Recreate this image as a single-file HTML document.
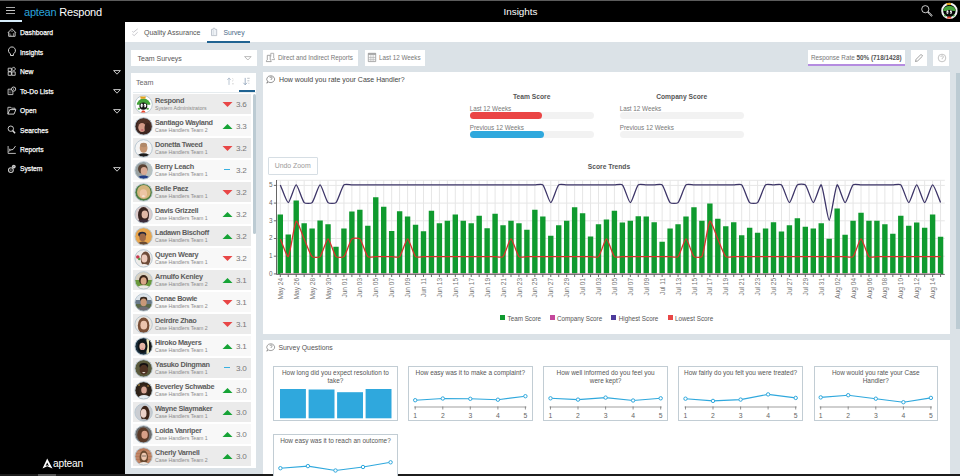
<!DOCTYPE html>
<html><head><meta charset="utf-8">
<style>
*{margin:0;padding:0;box-sizing:border-box}
html,body{width:960px;height:476px;overflow:hidden;background:#000;font-family:"Liberation Sans",sans-serif}
.a{position:absolute}
#topline{position:absolute;left:0;top:0;width:960px;height:1px;background:#5c5c5c}
#botline{position:absolute;left:0;top:474px;width:960px;height:2px;background:#1c1c1c}
#botthumb{position:absolute;left:37.5px;top:474px;width:18px;height:2px;background:#555}
.hb{position:absolute;left:6px;width:9px;height:1px;background:#c8c8c8}
#hbul{position:absolute;left:0;top:20.3px;width:22px;height:2px;background:#d6ecfa}
#logo{position:absolute;left:24px;top:5.7px;font-size:11px;color:#fff;letter-spacing:-0.2px;white-space:nowrap}
#logo span{color:#2aa3dc}
#title{position:absolute;left:503.5px;top:5.5px;font-size:9.9px;color:#fff}
.mi{position:absolute;left:19.8px;font-size:7.6px;color:#fff;white-space:nowrap;transform:scaleX(0.885);transform-origin:0 0;-webkit-text-stroke:0.25px #fff}
.mic{position:absolute;left:8px;width:8px;height:8px}
.marr{position:absolute;left:113px}
#content{position:absolute;left:125px;top:22px;width:835px;height:452px;background:#dbe2e7}
#tabs{position:absolute;left:125px;top:22px;width:835px;height:20.2px;background:#fff}
.tab{position:absolute;top:29.3px;font-size:7px;color:#555;white-space:nowrap}
#tabul{position:absolute;left:206.7px;top:40.6px;width:43.5px;height:2px;background:#1f6392}
.white{position:absolute;background:#fff}
.txt{position:absolute;white-space:nowrap}
.row{position:absolute;left:132.8px;width:118.5px;height:20.3px}
.odd{background:#ebebeb}.even{background:#f8f8f8}
.av{position:absolute}
.nm{position:absolute;left:155px;font-size:7.3px;font-weight:bold;color:#5c5c5c;letter-spacing:-0.3px;white-space:nowrap}
.sub{position:absolute;left:155px;font-size:5.2px;color:#8a8a8a;white-space:nowrap;letter-spacing:0px}
.tr{position:absolute}
.dash{position:absolute;width:6px;height:1.4px;background:#38b0e0}
.sc{position:absolute;left:236px;font-size:8.1px;color:#777;letter-spacing:-0.3px}
.yl{font-size:6.4px;fill:#666;font-family:"Liberation Sans",sans-serif}
.xl{font-size:6.6px;fill:#777;font-family:"Liberation Sans",sans-serif}
.cl{font-size:6.8px;fill:#666;font-family:"Liberation Sans",sans-serif}
.card{position:absolute;width:124.5px;height:54.5px;border:1px solid #c2cdd4;background:#fff}
.ct{position:absolute;left:0;right:0;top:1.5px;text-align:center;font-size:6.45px;line-height:8.4px;color:#555}
.lg{position:absolute;top:314.5px;font-size:6.3px;color:#555;white-space:nowrap}
.lgs{position:absolute;top:315px;width:5px;height:5px}
.bar{position:absolute;height:7px;border-radius:3.5px;background:#f2f2f2;width:124px}
.barl{position:absolute;font-size:6.3px;color:#777;white-space:nowrap}
</style></head><body>
<div id="topline"></div>
<div class="hb" style="top:6.7px;background:#aaa"></div><div class="hb" style="top:9.9px"></div><div class="hb" style="top:13px;background:#aaa"></div>
<div id="hbul"></div>
<div id="logo"><span>aptean</span> Respond</div>
<div id="title">Insights</div>
<!-- search icon -->
<svg class="a" style="left:920px;top:4px" width="14" height="14" viewBox="0 0 14 14"><circle cx="5.3" cy="5.2" r="3.6" fill="none" stroke="#ddd" stroke-width="0.9"/><path d="M7.9 7.9l4.2 4.2" stroke="#ddd" stroke-width="1.6"/><path d="M8.9 8.9l3.2 3.2" stroke="#000" stroke-width="0.5"/></svg>
<!-- top avatar -->
<svg class="a" style="left:939px;top:1px" width="20" height="20" viewBox="0 0 20 20">
<circle cx="10.4" cy="9.9" r="7.2" fill="#000" stroke="#f2f2f2" stroke-width="2"/>
<path d="M4.1 10A6.3 5.2 0 0 1 16.7 10Z" fill="#45a23a"/>
<ellipse cx="6.2" cy="14.6" rx="1.2" ry="1" fill="#45a23a"/><ellipse cx="14.5" cy="14.6" rx="1.2" ry="1" fill="#45a23a"/>
<path d="M7.4 2.1h4.8l-0.5 2h-3.8z" fill="#e2a21c"/>
<ellipse cx="10.4" cy="12.2" rx="4.2" ry="3.3" fill="#0a0a0a"/>
<ellipse cx="8.5" cy="11.1" rx="1.05" ry="1.9" fill="#fff"/><ellipse cx="11.9" cy="11.1" rx="1" ry="1.9" fill="#fff"/>
<path d="M9 11v1.2M11.4 11v1.2" stroke="#111" stroke-width="0.6"/>
<path d="M7.8 17.6C8.2 16.2 9.2 15.6 10.2 15.6S12.2 16.2 12.6 17.6z" fill="#e8452c"/>
</svg>
<div class="mi" style="top:28.2px">Dashboard</div>
<svg class="a" style="left:4px;top:24px" width="16" height="16"><path d="M4 8.6L7.9 4.7L11.8 8.6M4.7 8v4.3h6.4V8" fill="none" stroke="#ddd" stroke-width="0.9"/><path d="M6.7 7.1h2.4M5.9 9.3v1.3M5.4 11.2h2M9.4 9.2v3" stroke="#ccc" stroke-width="0.7"/></svg>
<div class="mi" style="top:47.6px">Insights</div>
<svg class="a" style="left:4px;top:44px" width="16" height="16"><path d="M6.5 9.8A3.5 3.6 0 1 1 9.4 9.8V11.5H6.5Z" fill="none" stroke="#ddd" stroke-width="0.95"/></svg>
<div class="mi" style="top:67.1px">New</div>
<svg class="a" style="left:4px;top:63px" width="16" height="16"><path d="M4.2 5.2h3.2v3.2h-3.2zM4.2 8.9h3.2v3.4h-3.2zM7.9 8.9h3.3v3.4h-3.3zM9.6 3.9l2 2.1-2 2.1-2-2.1z" fill="none" stroke="#ddd" stroke-width="0.85"/></svg>
<svg class="marr" style="top:70.0px" width="8" height="5"><path d="M0.6 0.6h6.8L4 4.2z" fill="none" stroke="#ddd" stroke-width="0.9"/></svg>
<div class="mi" style="top:86.5px">To-Do Lists</div>
<svg class="a" style="left:4px;top:82px" width="16" height="16"><path d="M4.1 7.2h4.8v5.4h-4.8z" fill="none" stroke="#ccc" stroke-width="0.9"/><path d="M5 9h2.5M5 10.8h2.5" stroke="#999" stroke-width="0.6"/><circle cx="9.6" cy="7.1" r="2.1" fill="#000" stroke="#ddd" stroke-width="0.9"/><circle cx="9.6" cy="7.1" r="0.6" fill="#ddd"/></svg>
<svg class="marr" style="top:89.4px" width="8" height="5"><path d="M0.6 0.6h6.8L4 4.2z" fill="none" stroke="#ddd" stroke-width="0.9"/></svg>
<div class="mi" style="top:106.0px">Open</div>
<svg class="a" style="left:4px;top:102px" width="16" height="16"><path d="M3.9 12.1V5.3h2.9l0.8 0.9h3.4v1.4" fill="none" stroke="#ccc" stroke-width="0.9"/><path d="M3.9 12.1l1.9-4.5h6.1l-1.9 4.5z" fill="none" stroke="#ddd" stroke-width="0.9"/></svg>
<svg class="marr" style="top:108.9px" width="8" height="5"><path d="M0.6 0.6h6.8L4 4.2z" fill="none" stroke="#ddd" stroke-width="0.9"/></svg>
<div class="mi" style="top:125.5px">Searches</div>
<svg class="a" style="left:4px;top:121px" width="16" height="16"><circle cx="6.8" cy="7.7" r="2.7" fill="none" stroke="#ddd" stroke-width="0.9"/><path d="M8.6 9.6l2.5 2.7" stroke="#ddd" stroke-width="1.5"/></svg>
<div class="mi" style="top:144.9px">Reports</div>
<svg class="a" style="left:4px;top:141px" width="16" height="16"><path d="M4.1 5v7.4h7.7" fill="none" stroke="#ccc" stroke-width="0.9"/><path d="M4.6 10.4l2.4-1.6 2-0.3 2.5-3.4M5 8.3h1.5" fill="none" stroke="#ddd" stroke-width="0.9"/></svg>
<div class="mi" style="top:164.3px">System</div>
<svg class="a" style="left:4px;top:160px" width="16" height="16"><circle cx="6.9" cy="10.1" r="2.4" fill="none" stroke="#ccc" stroke-width="1.1"/><circle cx="6.9" cy="10.1" r="0.8" fill="#999"/><circle cx="9.8" cy="6.6" r="1.9" fill="#ccc"/><circle cx="9.9" cy="6.4" r="0.5" fill="#666"/></svg>
<svg class="marr" style="top:167.2px" width="8" height="5"><path d="M0.6 0.6h6.8L4 4.2z" fill="none" stroke="#ddd" stroke-width="0.9"/></svg>
<!-- aptean bottom logo -->
<svg class="a" style="left:41.5px;top:457.5px" width="11" height="11" viewBox="0 0 11 11"><path d="M5.2 0.5L10.5 10.5L5.2 8.3L0.5 10.5Z" fill="#fff"/><path d="M5.2 4.5L7 8L5.2 7.3L3.6 8Z" fill="#000"/></svg>
<div class="txt" style="left:53px;top:457.7px;font-size:10.2px;color:#fff;letter-spacing:-0.2px">aptean</div>
<div id="botline"></div><div id="botthumb"></div>

<div id="content"></div>
<div id="tabs"></div>
<div class="tab" style="left:144px">Quality Assurance</div>
<div class="tab" style="left:223.4px;color:#4a6a88;font-size:6.8px">Survey</div>
<svg class="a" style="left:128px;top:24px" width="20" height="16"><path d="M4.3 7.2l1.1 1.1 4.3-3.4M4.3 10.1l1.9 1.5 3.5-3.4" fill="none" stroke="#b0b0b8" stroke-width="0.7"/></svg>
<svg class="a" style="left:206px;top:24px" width="20" height="16"><path d="M5.5 11.6V5.4h1.2l0.6-1.2h1.4l0.6 1.2h1.4v6.2z" fill="#eef2f6" stroke="#a8b0bc" stroke-width="0.7"/><path d="M7.3 5.4v6.2" stroke="#c8d0d8" stroke-width="0.6"/></svg>
<div id="tabul"></div>

<!-- dropdown -->
<div class="white" style="left:131.4px;top:50px;width:125.5px;height:16px"></div>
<div class="txt" style="left:137.5px;top:54.5px;font-size:7px;color:#555">Team Surveys</div>
<svg class="a" style="left:243.5px;top:56px" width="8" height="5"><path d="M0.6 0.6h6.5L3.85 4z" fill="none" stroke="#aaa" stroke-width="0.8"/></svg>

<!-- team panel -->
<div class="white" style="left:131.3px;top:72.8px;width:125px;height:394.8px"></div>
<div class="txt" style="left:136px;top:77.6px;font-size:7.2px;color:#666">Team</div>
<svg class="a" style="left:220px;top:72px" width="40" height="24"><path d="M9 12.9V6M7.3 7.9L9 5.9l1.7 2" fill="none" stroke="#a8b8c8" stroke-width="0.8"/><path d="M12.3 6.6h0.8M12.1 9.3l1.4-1.3M12 11.8h1.8" stroke="#b8b8b8" stroke-width="0.6"/><path d="M25.2 5.9v6.9M23.4 10.8l1.8 2 1.8-2" fill="none" stroke="#8aa0b8" stroke-width="0.8"/><path d="M27.2 6.3h2.5M27.4 8.8h2M28.4 11.3h0.9" stroke="#a0a8b0" stroke-width="0.7"/></svg>
<div class="a" style="left:133px;top:92px;width:123px;height:1px;background:#e6ecef"></div>
<div class="a" style="left:239px;top:90.4px;width:16px;height:2px;background:#1f6392"></div>
<div class="row odd" style="top:94px"></div>
<svg class="av" style="left:133.5px;top:94.5px" width="19" height="19" viewBox="0 0 19 19">
<circle cx="9.6" cy="9.4" r="8.7" fill="#fff" stroke="#b4c4cf" stroke-width="0.9"/>
<path d="M2.9 9.8A6.7 6.2 0 0 1 16.3 9.8Z" fill="#45a23a"/>
<ellipse cx="4.95" cy="13.8" rx="1.25" ry="1" fill="#45a23a"/><ellipse cx="13.6" cy="13.8" rx="1.25" ry="1" fill="#45a23a"/>
<path d="M6.1 1.6h5.8l-0.6 2.1h-4.6z" fill="#e2a21c"/>
<ellipse cx="9.35" cy="11.1" rx="3.95" ry="3.6" fill="#111"/>
<ellipse cx="7.75" cy="10.45" rx="1.15" ry="1.95" fill="#fff"/><ellipse cx="11" cy="10.45" rx="1.2" ry="1.95" fill="#fff"/>
<path d="M8.3 10.4v1.2M10.5 10.4v1.2" stroke="#111" stroke-width="0.6"/>
<path d="M7.1 17.5C7.4 16 8.3 15.4 9.3 15.4S11.2 16 11.5 17.5z" fill="#e8452c"/>
</svg>
<div class="nm" style="top:96px">Respond</div>
<div class="sub" style="top:105.3px">System Administrators</div>
<svg class="tr" style="left:221.8px;top:100.5px" width="11" height="7"><path d="M0.5 1h10l-5 5z" fill="#e84646"/></svg>
<div class="sc" style="top:100px">3.6</div>
<div class="row even" style="top:116px"></div>
<svg class="av" style="left:133.5px;top:116.5px" width="19" height="19" viewBox="0 0 19 19"><defs><clipPath id="c126"><circle cx="9.6" cy="9.4" r="8.6"/></clipPath></defs><g clip-path="url(#c126)"><rect width="19" height="19" fill="#3a241e"/><ellipse cx="10.5" cy="8" rx="7.5" ry="7" fill="#4e3026"/><ellipse cx="8" cy="10.5" rx="3.7" ry="4.6" fill="#d49a88"/><ellipse cx="8.3" cy="13" rx="1.3" ry="0.8" fill="#c05a6a"/><ellipse cx="13.5" cy="11" rx="3" ry="5" fill="#3e2620"/></g><circle cx="9.6" cy="9.4" r="8.7" fill="none" stroke="#b4c4cf" stroke-width="0.9"/></svg>
<div class="nm" style="top:118px">Santiago Wayland</div>
<div class="sub" style="top:127.3px">Case Handlers Team 2</div>
<svg class="tr" style="left:221.8px;top:122.5px" width="11" height="7"><path d="M0.5 6h10l-5-5z" fill="#16a336"/></svg>
<div class="sc" style="top:122px">3.3</div>
<div class="row odd" style="top:138px"></div>
<svg class="av" style="left:133.5px;top:138.5px" width="19" height="19" viewBox="0 0 19 19"><defs><clipPath id="c148"><circle cx="9.6" cy="9.4" r="8.6"/></clipPath></defs><g clip-path="url(#c148)"><rect width="19" height="19" fill="#f4f4f4"/><ellipse cx="9.6" cy="9" rx="3.9" ry="4.8" fill="#c49470"/><ellipse cx="9.6" cy="6" rx="3.4" ry="2.2" fill="#b08868"/><ellipse cx="9.6" cy="18.6" rx="7" ry="4.3" fill="#1c1c1c"/></g><circle cx="9.6" cy="9.4" r="8.7" fill="none" stroke="#b4c4cf" stroke-width="0.9"/></svg>
<div class="nm" style="top:140px">Donetta Tweed</div>
<div class="sub" style="top:149.3px">Case Handlers Team 1</div>
<svg class="tr" style="left:221.8px;top:144.5px" width="11" height="7"><path d="M0.5 1h10l-5 5z" fill="#e84646"/></svg>
<div class="sc" style="top:144px">3.2</div>
<div class="row even" style="top:160px"></div>
<svg class="av" style="left:133.5px;top:160.5px" width="19" height="19" viewBox="0 0 19 19"><defs><clipPath id="c170"><circle cx="9.6" cy="9.4" r="8.6"/></clipPath></defs><g clip-path="url(#c170)"><rect width="19" height="19" fill="#98a0a0"/><rect x="12" width="7" height="19" fill="#b8c0bc"/><ellipse cx="8.8" cy="8" rx="4.8" ry="4.8" fill="#5a4232"/><ellipse cx="10" cy="10" rx="3.3" ry="3.9" fill="#d8aa94"/><ellipse cx="9.6" cy="18" rx="6.5" ry="3.6" fill="#223c86"/></g><circle cx="9.6" cy="9.4" r="8.7" fill="none" stroke="#b4c4cf" stroke-width="0.9"/></svg>
<div class="nm" style="top:162px">Berry Leach</div>
<div class="sub" style="top:171.3px">Case Handlers Team 1</div>
<div class="dash" style="left:224.3px;top:169.0px"></div>
<div class="sc" style="top:166px">3.2</div>
<div class="row odd" style="top:182px"></div>
<svg class="av" style="left:133.5px;top:182.5px" width="19" height="19" viewBox="0 0 19 19"><defs><clipPath id="c192"><circle cx="9.6" cy="9.4" r="8.6"/></clipPath></defs><g clip-path="url(#c192)"><rect width="19" height="19" fill="#4e7e42"/><ellipse cx="9.8" cy="9" rx="6.8" ry="7" fill="#d4b47c"/><ellipse cx="9.4" cy="10.6" rx="3.7" ry="4.4" fill="#ecc4a4"/><ellipse cx="9.4" cy="13" rx="1.5" ry="0.6" fill="#fff"/></g><circle cx="9.6" cy="9.4" r="8.7" fill="none" stroke="#b4c4cf" stroke-width="0.9"/></svg>
<div class="nm" style="top:184px">Belle Paez</div>
<div class="sub" style="top:193.3px">Case Handlers Team 1</div>
<svg class="tr" style="left:221.8px;top:188.5px" width="11" height="7"><path d="M0.5 1h10l-5 5z" fill="#e84646"/></svg>
<div class="sc" style="top:188px">3.2</div>
<div class="row even" style="top:204px"></div>
<svg class="av" style="left:133.5px;top:204.5px" width="19" height="19" viewBox="0 0 19 19"><defs><clipPath id="c214"><circle cx="9.6" cy="9.4" r="8.6"/></clipPath></defs><g clip-path="url(#c214)"><rect width="19" height="19" fill="#dccccc"/><ellipse cx="9.5" cy="10" rx="5.5" ry="8" fill="#3a2420"/><ellipse cx="10.8" cy="9.6" rx="3.2" ry="4" fill="#e2b8a6"/><ellipse cx="9.6" cy="18.2" rx="7" ry="3.8" fill="#3a2a3a"/></g><circle cx="9.6" cy="9.4" r="8.7" fill="none" stroke="#b4c4cf" stroke-width="0.9"/></svg>
<div class="nm" style="top:206px">Davis Grizzell</div>
<div class="sub" style="top:215.3px">Case Handlers Team 1</div>
<svg class="tr" style="left:221.8px;top:210.5px" width="11" height="7"><path d="M0.5 6h10l-5-5z" fill="#16a336"/></svg>
<div class="sc" style="top:210px">3.2</div>
<div class="row odd" style="top:226px"></div>
<svg class="av" style="left:133.5px;top:226.5px" width="19" height="19" viewBox="0 0 19 19"><defs><clipPath id="c236"><circle cx="9.6" cy="9.4" r="8.6"/></clipPath></defs><g clip-path="url(#c236)"><rect width="19" height="19" fill="#e8a64e"/><ellipse cx="8.2" cy="7.4" rx="4" ry="2.6" fill="#28283a"/><ellipse cx="8.6" cy="10.4" rx="3.3" ry="3.8" fill="#a06a48"/><ellipse cx="9" cy="17.5" rx="5.5" ry="3" fill="#6a4a30"/></g><circle cx="9.6" cy="9.4" r="8.7" fill="none" stroke="#b4c4cf" stroke-width="0.9"/></svg>
<div class="nm" style="top:228px">Ladawn Bischoff</div>
<div class="sub" style="top:237.3px">Case Handlers Team 1</div>
<svg class="tr" style="left:221.8px;top:232.5px" width="11" height="7"><path d="M0.5 6h10l-5-5z" fill="#16a336"/></svg>
<div class="sc" style="top:232px">3.2</div>
<div class="row even" style="top:248px"></div>
<svg class="av" style="left:133.5px;top:248.5px" width="19" height="19" viewBox="0 0 19 19"><defs><clipPath id="c258"><circle cx="9.6" cy="9.4" r="8.6"/></clipPath></defs><g clip-path="url(#c258)"><rect width="19" height="19" fill="#eeecea"/><circle cx="3.8" cy="8" r="1.8" fill="#c83a50"/><circle cx="5.2" cy="10" r="1.2" fill="#5a9a4a"/><ellipse cx="11.5" cy="10" rx="4.8" ry="7.5" fill="#6e4c3a"/><ellipse cx="10.4" cy="9.6" rx="3" ry="4" fill="#eccabc"/><ellipse cx="10" cy="17.5" rx="4.5" ry="2.6" fill="#f4f0ee"/></g><circle cx="9.6" cy="9.4" r="8.7" fill="none" stroke="#b4c4cf" stroke-width="0.9"/></svg>
<div class="nm" style="top:250px">Quyen Weary</div>
<div class="sub" style="top:259.3px">Case Handlers Team 1</div>
<svg class="tr" style="left:221.8px;top:254.5px" width="11" height="7"><path d="M0.5 1h10l-5 5z" fill="#e84646"/></svg>
<div class="sc" style="top:254px">3.2</div>
<div class="row odd" style="top:270px"></div>
<svg class="av" style="left:133.5px;top:270.5px" width="19" height="19" viewBox="0 0 19 19"><defs><clipPath id="c280"><circle cx="9.6" cy="9.4" r="8.6"/></clipPath></defs><g clip-path="url(#c280)"><rect width="19" height="19" fill="#d8d0c0"/><rect y="9" width="19" height="10" fill="#6a9a3c"/><ellipse cx="9.6" cy="9" rx="4.5" ry="5" fill="#3a2418"/><ellipse cx="9.6" cy="10" rx="3" ry="3.8" fill="#d8a888"/><ellipse cx="9.6" cy="18.4" rx="7.5" ry="4.2" fill="#ece8e4"/></g><circle cx="9.6" cy="9.4" r="8.7" fill="none" stroke="#b4c4cf" stroke-width="0.9"/></svg>
<div class="nm" style="top:272px">Arnulfo Kenley</div>
<div class="sub" style="top:281.3px">Case Handlers Team 2</div>
<svg class="tr" style="left:221.8px;top:276.5px" width="11" height="7"><path d="M0.5 6h10l-5-5z" fill="#16a336"/></svg>
<div class="sc" style="top:276px">3.1</div>
<div class="row even" style="top:292px"></div>
<svg class="av" style="left:133.5px;top:292.5px" width="19" height="19" viewBox="0 0 19 19"><defs><clipPath id="c302"><circle cx="9.6" cy="9.4" r="8.6"/></clipPath></defs><g clip-path="url(#c302)"><rect width="19" height="19" fill="#dde4ea"/><rect y="7" width="19" height="4" fill="#6a7a8a"/><rect y="11" width="19" height="8" fill="#5a6848"/><ellipse cx="9.6" cy="6.2" rx="3.6" ry="2.4" fill="#3a2a20"/><ellipse cx="9.6" cy="9.4" rx="3.1" ry="3.8" fill="#c89878"/><ellipse cx="9.6" cy="17.6" rx="6.8" ry="4" fill="#6e6c74"/></g><circle cx="9.6" cy="9.4" r="8.7" fill="none" stroke="#b4c4cf" stroke-width="0.9"/></svg>
<div class="nm" style="top:294px">Denae Bowie</div>
<div class="sub" style="top:303.3px">Case Handlers Team 2</div>
<svg class="tr" style="left:221.8px;top:298.5px" width="11" height="7"><path d="M0.5 1h10l-5 5z" fill="#e84646"/></svg>
<div class="sc" style="top:298px">3.1</div>
<div class="row odd" style="top:314px"></div>
<svg class="av" style="left:133.5px;top:314.5px" width="19" height="19" viewBox="0 0 19 19"><defs><clipPath id="c324"><circle cx="9.6" cy="9.4" r="8.6"/></clipPath></defs><g clip-path="url(#c324)"><rect width="19" height="19" fill="#ebe6e0"/><ellipse cx="9.6" cy="10.5" rx="5.8" ry="8" fill="#7a5038"/><ellipse cx="9.8" cy="10.2" rx="3.4" ry="4.4" fill="#ecc4ae"/></g><circle cx="9.6" cy="9.4" r="8.7" fill="none" stroke="#b4c4cf" stroke-width="0.9"/></svg>
<div class="nm" style="top:316px">Deirdre Zhao</div>
<div class="sub" style="top:325.3px">Case Handlers Team 2</div>
<svg class="tr" style="left:221.8px;top:320.5px" width="11" height="7"><path d="M0.5 1h10l-5 5z" fill="#e84646"/></svg>
<div class="sc" style="top:320px">3.1</div>
<div class="row even" style="top:336px"></div>
<svg class="av" style="left:133.5px;top:336.5px" width="19" height="19" viewBox="0 0 19 19"><defs><clipPath id="c346"><circle cx="9.6" cy="9.4" r="8.6"/></clipPath></defs><g clip-path="url(#c346)"><rect width="19" height="19" fill="#182c3a"/><rect x="12.5" width="6.5" height="19" fill="#ece4b4"/><rect x="15" width="4" height="19" fill="#1a1a1a"/><ellipse cx="8.5" cy="9" rx="5" ry="7" fill="#0e1418"/><ellipse cx="8.4" cy="9.4" rx="3" ry="3.6" fill="#e4b4a4"/><ellipse cx="8.4" cy="12" rx="1.2" ry="0.6" fill="#c86a7a"/></g><circle cx="9.6" cy="9.4" r="8.7" fill="none" stroke="#b4c4cf" stroke-width="0.9"/></svg>
<div class="nm" style="top:338px">Hiroko Mayers</div>
<div class="sub" style="top:347.3px">Case Handlers Team 1</div>
<svg class="tr" style="left:221.8px;top:342.5px" width="11" height="7"><path d="M0.5 6h10l-5-5z" fill="#16a336"/></svg>
<div class="sc" style="top:342px">3.1</div>
<div class="row odd" style="top:358px"></div>
<svg class="av" style="left:133.5px;top:358.5px" width="19" height="19" viewBox="0 0 19 19"><defs><clipPath id="c368"><circle cx="9.6" cy="9.4" r="8.6"/></clipPath></defs><g clip-path="url(#c368)"><rect width="19" height="19" fill="#5a5a3c"/><ellipse cx="9.8" cy="7" rx="4.4" ry="3" fill="#141010"/><ellipse cx="9.8" cy="10.8" rx="4.2" ry="5" fill="#4e3222"/><ellipse cx="9.8" cy="13.6" rx="1.6" ry="0.6" fill="#e8e0d8"/></g><circle cx="9.6" cy="9.4" r="8.7" fill="none" stroke="#b4c4cf" stroke-width="0.9"/></svg>
<div class="nm" style="top:360px">Yasuko Dingman</div>
<div class="sub" style="top:369.3px">Case Handlers Team 1</div>
<div class="dash" style="left:224.3px;top:367.0px"></div>
<div class="sc" style="top:364px">3.0</div>
<div class="row even" style="top:380px"></div>
<svg class="av" style="left:133.5px;top:380.5px" width="19" height="19" viewBox="0 0 19 19"><defs><clipPath id="c390"><circle cx="9.6" cy="9.4" r="8.6"/></clipPath></defs><g clip-path="url(#c390)"><rect width="19" height="19" fill="#2e2218"/><circle cx="5" cy="4" r="0.8" fill="#e8c060"/><circle cx="14" cy="5" r="0.8" fill="#c89040"/><ellipse cx="9.6" cy="9.5" rx="4.5" ry="6" fill="#3a2a20"/><ellipse cx="10" cy="9" rx="2.8" ry="3.6" fill="#d8a898"/><ellipse cx="10" cy="17.5" rx="6" ry="3.6" fill="#e4ecf2"/></g><circle cx="9.6" cy="9.4" r="8.7" fill="none" stroke="#b4c4cf" stroke-width="0.9"/></svg>
<div class="nm" style="top:382px">Beverley Schwabe</div>
<div class="sub" style="top:391.3px">Case Handlers Team 1</div>
<svg class="tr" style="left:221.8px;top:386.5px" width="11" height="7"><path d="M0.5 6h10l-5-5z" fill="#16a336"/></svg>
<div class="sc" style="top:386px">3.0</div>
<div class="row odd" style="top:402px"></div>
<svg class="av" style="left:133.5px;top:402.5px" width="19" height="19" viewBox="0 0 19 19"><defs><clipPath id="c412"><circle cx="9.6" cy="9.4" r="8.6"/></clipPath></defs><g clip-path="url(#c412)"><rect width="19" height="19" fill="#cacdd2"/><ellipse cx="11" cy="10.6" rx="4.6" ry="7.8" fill="#3c2418"/><ellipse cx="9.6" cy="10.4" rx="2.9" ry="4.3" fill="#ecd2c8"/><ellipse cx="9.6" cy="18" rx="3.5" ry="2.2" fill="#b4b8bc"/></g><circle cx="9.6" cy="9.4" r="8.7" fill="none" stroke="#b4c4cf" stroke-width="0.9"/></svg>
<div class="nm" style="top:404px">Wayne Slaymaker</div>
<div class="sub" style="top:413.3px">Case Handlers Team 1</div>
<svg class="tr" style="left:221.8px;top:408.5px" width="11" height="7"><path d="M0.5 6h10l-5-5z" fill="#16a336"/></svg>
<div class="sc" style="top:408px">3.0</div>
<div class="row even" style="top:424px"></div>
<svg class="av" style="left:133.5px;top:424.5px" width="19" height="19" viewBox="0 0 19 19"><defs><clipPath id="c434"><circle cx="9.6" cy="9.4" r="8.6"/></clipPath></defs><g clip-path="url(#c434)"><rect width="19" height="19" fill="#6e6e6e"/><ellipse cx="9.2" cy="10" rx="6" ry="7.5" fill="#5a3a28"/><ellipse cx="10.6" cy="9.8" rx="3.2" ry="4" fill="#d8a088"/></g><circle cx="9.6" cy="9.4" r="8.7" fill="none" stroke="#b4c4cf" stroke-width="0.9"/></svg>
<div class="nm" style="top:426px">Loida Vanriper</div>
<div class="sub" style="top:435.3px">Case Handlers Team 1</div>
<svg class="tr" style="left:221.8px;top:430.5px" width="11" height="7"><path d="M0.5 6h10l-5-5z" fill="#16a336"/></svg>
<div class="sc" style="top:430px">3.0</div>
<div class="row odd" style="top:446px"></div>
<svg class="av" style="left:133.5px;top:446.5px" width="19" height="19" viewBox="0 0 19 19"><defs><clipPath id="c456"><circle cx="9.6" cy="9.4" r="8.6"/></clipPath></defs><g clip-path="url(#c456)"><rect width="19" height="19" fill="#b87a5a"/><path d="M0 5h19M0 8h19M0 11h19M0 14h19" stroke="#d8a888" stroke-width="0.6"/><ellipse cx="9.8" cy="10.5" rx="4.2" ry="7" fill="#6a4a30"/><ellipse cx="10" cy="9.6" rx="2.8" ry="3.8" fill="#ecc6ae"/><path d="M7.8 9h4.4" stroke="#333" stroke-width="0.6"/><ellipse cx="9.8" cy="18" rx="5.5" ry="3" fill="#f0e8e0"/></g><circle cx="9.6" cy="9.4" r="8.7" fill="none" stroke="#b4c4cf" stroke-width="0.9"/></svg>
<div class="nm" style="top:448px">Cherly Varnell</div>
<div class="sub" style="top:457.3px">Case Handlers Team 2</div>
<svg class="tr" style="left:221.8px;top:452.5px" width="11" height="7"><path d="M0.5 6h10l-5-5z" fill="#16a336"/></svg>
<div class="sc" style="top:452px">3.0</div>
<div class="a" style="left:252.6px;top:94px;width:3.6px;height:139.6px;border-radius:2px;background:#bccbd3"></div>

<!-- filter buttons -->
<div class="white" style="left:262.9px;top:50px;width:95.2px;height:16px"></div>
<svg class="a" style="left:263px;top:50px" width="16" height="16"><path d="M7.8 6.5V3.3h2.9v4.8l0.8 0.6v0.9H8.6" fill="none" stroke="#999" stroke-width="0.75"/><path d="M4.3 5.3h2.9v4.6l1 0.8v0.9H3.4v-0.9l0.9-0.8z" fill="#fff" stroke="#888" stroke-width="0.75"/></svg>
<div class="txt" style="left:277.9px;top:53.8px;font-size:6.3px;color:#777">Direct and Indirect Reports</div>
<div class="white" style="left:364.7px;top:50px;width:60.6px;height:16px"></div>
<svg class="a" style="left:365px;top:50px" width="16" height="16"><path d="M3.3 3.3h7.4v8.3H3.3z" fill="none" stroke="#888" stroke-width="0.7"/><path d="M3.3 4.1h7.4" stroke="#999" stroke-width="1.4"/><path d="M3.3 7.5h7.4M3.3 9.6h7.4M5.3 5.1v6.5M7 5.1v6.5M8.7 5.1v6.5" stroke="#aaa" stroke-width="0.55"/></svg>
<div class="txt" style="left:379px;top:53.8px;font-size:6.3px;color:#777">Last 12 Weeks</div>

<div class="white" style="left:807.8px;top:50.2px;width:96.9px;height:15.5px"></div>
<div class="a" style="left:807.8px;top:63.8px;width:96.9px;height:2px;background:#b58ce0"></div>
<div class="txt" style="left:811px;top:53.5px;font-size:6.35px;color:#777">Response Rate <b style="color:#555">50% (718/1428)</b></div>
<div class="white" style="left:910.8px;top:50.2px;width:16.2px;height:15.8px"></div>
<svg class="a" style="left:914px;top:53px" width="10" height="10"><path d="M1.5 8.5l0.6-2.2L7 1.4l1.6 1.6-4.9 4.9z" fill="none" stroke="#777" stroke-width="0.7"/></svg>
<div class="white" style="left:933.3px;top:50.2px;width:16.2px;height:15.8px"></div>
<svg class="a" style="left:936.5px;top:53px" width="10" height="10"><circle cx="5" cy="5" r="3.8" fill="none" stroke="#aaa" stroke-width="0.7"/><path d="M3.8 4a1.3 1.3 0 1 1 1.3 1.3v1" fill="none" stroke="#aaa" stroke-width="0.6"/></svg>

<!-- main scrollbar -->
<div class="a" style="left:956px;top:72.6px;width:4px;height:256px;background:#bccbd3"></div>

<!-- main panel 1 -->
<div class="white" style="left:263px;top:72.3px;width:686.6px;height:261.7px"></div>
<svg class="a" style="left:266px;top:74.5px" width="10" height="9"><path d="M5 0.8a4 3.4 0 1 1-2.6 6.2L0.8 8.2l0.8-1.9A4 3.4 0 0 1 5 0.8z" fill="none" stroke="#666" stroke-width="0.7"/><path d="M4 3a1.1 1.1 0 1 1 1.1 1.1v0.9" fill="none" stroke="#666" stroke-width="0.6"/></svg>
<div class="txt" style="left:278.9px;top:75.8px;font-size:7px;color:#444">How would you rate your Case Handler?</div>

<div class="txt" style="left:513px;top:92.6px;font-size:6.7px;font-weight:bold;color:#555">Team Score</div>
<div class="barl" style="left:469.7px;top:105.3px">Last 12 Weeks</div>
<div class="bar" style="left:469.5px;top:112px"></div>
<div class="bar" style="left:469.5px;top:112px;width:72px;background:#ea4545"></div>
<div class="barl" style="left:469.7px;top:124.3px">Previous 12 Weeks</div>
<div class="bar" style="left:469.5px;top:131px"></div>
<div class="bar" style="left:469.5px;top:131px;width:74.5px;background:#2fa8dd"></div>

<div class="txt" style="left:656.2px;top:92.6px;font-size:6.7px;font-weight:bold;color:#555">Company Score</div>
<div class="barl" style="left:619.7px;top:105.3px">Last 12 Weeks</div>
<div class="bar" style="left:619.5px;top:112px"></div>
<div class="barl" style="left:619.7px;top:124.3px">Previous 12 Weeks</div>
<div class="bar" style="left:619.5px;top:131px"></div>

<div class="a" style="left:268.2px;top:157.4px;width:49.8px;height:17.6px;border:1px solid #d6dee4;border-radius:1px;background:#fff"></div>
<div class="txt" style="left:274.7px;top:161.8px;font-size:6.9px;color:#999">Undo Zoom</div>
<div class="txt" style="left:587.8px;top:162.8px;font-size:6.7px;font-weight:bold;color:#555">Score Trends</div>

<svg class="chart" width="960" height="476" viewBox="0 0 960 476" style="position:absolute;left:0;top:0">
<path d="M280.30 180.3V273.9M288.25 180.3V273.9M296.21 180.3V273.9M304.17 180.3V273.9M312.12 180.3V273.9M320.07 180.3V273.9M328.03 180.3V273.9M335.99 180.3V273.9M343.94 180.3V273.9M351.89 180.3V273.9M359.85 180.3V273.9M367.81 180.3V273.9M375.76 180.3V273.9M383.72 180.3V273.9M391.67 180.3V273.9M399.62 180.3V273.9M407.58 180.3V273.9M415.54 180.3V273.9M423.49 180.3V273.9M431.45 180.3V273.9M439.40 180.3V273.9M447.36 180.3V273.9M455.31 180.3V273.9M463.26 180.3V273.9M471.22 180.3V273.9M479.18 180.3V273.9M487.13 180.3V273.9M495.09 180.3V273.9M503.04 180.3V273.9M511.00 180.3V273.9M518.95 180.3V273.9M526.90 180.3V273.9M534.86 180.3V273.9M542.82 180.3V273.9M550.77 180.3V273.9M558.73 180.3V273.9M566.68 180.3V273.9M574.63 180.3V273.9M582.59 180.3V273.9M590.55 180.3V273.9M598.50 180.3V273.9M606.46 180.3V273.9M614.41 180.3V273.9M622.37 180.3V273.9M630.32 180.3V273.9M638.28 180.3V273.9M646.23 180.3V273.9M654.18 180.3V273.9M662.14 180.3V273.9M670.10 180.3V273.9M678.05 180.3V273.9M686.00 180.3V273.9M693.96 180.3V273.9M701.91 180.3V273.9M709.87 180.3V273.9M717.83 180.3V273.9M725.78 180.3V273.9M733.74 180.3V273.9M741.69 180.3V273.9M749.64 180.3V273.9M757.60 180.3V273.9M765.56 180.3V273.9M773.51 180.3V273.9M781.47 180.3V273.9M789.42 180.3V273.9M797.38 180.3V273.9M805.33 180.3V273.9M813.29 180.3V273.9M821.24 180.3V273.9M829.19 180.3V273.9M837.15 180.3V273.9M845.11 180.3V273.9M853.06 180.3V273.9M861.02 180.3V273.9M868.97 180.3V273.9M876.92 180.3V273.9M884.88 180.3V273.9M892.84 180.3V273.9M900.79 180.3V273.9M908.75 180.3V273.9M916.70 180.3V273.9M924.65 180.3V273.9M932.61 180.3V273.9M940.57 180.3V273.9M276.5 256.20H944.8M276.5 238.50H944.8M276.5 220.80H944.8M276.5 203.10H944.8M276.5 185.40H944.8M276.5 180.3H944.8" stroke="#e6e6e6" stroke-width="1" fill="none"/>
<path d="M277.60 214.43h5.4V273.90h-5.4zM285.56 234.61h5.4V273.90h-5.4zM293.51 200.62h5.4V273.90h-5.4zM301.47 223.28h5.4V273.90h-5.4zM309.42 228.59h5.4V273.90h-5.4zM317.38 220.45h5.4V273.90h-5.4zM325.33 224.16h5.4V273.90h-5.4zM333.29 246.64h5.4V273.90h-5.4zM341.24 228.59h5.4V273.90h-5.4zM349.19 211.60h5.4V273.90h-5.4zM357.15 209.83h5.4V273.90h-5.4zM365.11 225.76h5.4V273.90h-5.4zM373.06 197.26h5.4V273.90h-5.4zM381.02 206.64h5.4V273.90h-5.4zM388.97 230.89h5.4V273.90h-5.4zM396.93 211.24h5.4V273.90h-5.4zM404.88 216.55h5.4V273.90h-5.4zM412.84 224.69h5.4V273.90h-5.4zM420.79 231.24h5.4V273.90h-5.4zM428.75 210.71h5.4V273.90h-5.4zM436.70 223.28h5.4V273.90h-5.4zM444.66 220.80h5.4V273.90h-5.4zM452.61 214.60h5.4V273.90h-5.4zM460.56 220.80h5.4V273.90h-5.4zM468.52 223.28h5.4V273.90h-5.4zM476.48 215.67h5.4V273.90h-5.4zM484.43 228.23h5.4V273.90h-5.4zM492.39 213.72h5.4V273.90h-5.4zM500.34 225.22h5.4V273.90h-5.4zM508.30 220.80h5.4V273.90h-5.4zM516.25 223.28h5.4V273.90h-5.4zM524.20 229.83h5.4V273.90h-5.4zM532.16 209.65h5.4V273.90h-5.4zM540.12 216.55h5.4V273.90h-5.4zM548.07 235.84h5.4V273.90h-5.4zM556.02 225.22h5.4V273.90h-5.4zM563.98 220.80h5.4V273.90h-5.4zM571.93 207.35h5.4V273.90h-5.4zM579.89 213.37h5.4V273.90h-5.4zM587.85 236.38h5.4V273.90h-5.4zM595.80 224.16h5.4V273.90h-5.4zM603.75 219.38h5.4V273.90h-5.4zM611.71 210.71h5.4V273.90h-5.4zM619.66 222.57h5.4V273.90h-5.4zM627.62 220.80h5.4V273.90h-5.4zM635.58 216.20h5.4V273.90h-5.4zM643.53 216.55h5.4V273.90h-5.4zM651.48 222.22h5.4V273.90h-5.4zM659.44 241.69h5.4V273.90h-5.4zM667.39 228.59h5.4V273.90h-5.4zM675.35 224.16h5.4V273.90h-5.4zM683.30 216.55h5.4V273.90h-5.4zM691.26 207.35h5.4V273.90h-5.4zM699.21 220.80h5.4V273.90h-5.4zM707.17 203.45h5.4V273.90h-5.4zM715.12 218.68h5.4V273.90h-5.4zM723.08 226.29h5.4V273.90h-5.4zM731.03 222.22h5.4V273.90h-5.4zM738.99 235.31h5.4V273.90h-5.4zM746.94 227.70h5.4V273.90h-5.4zM754.90 232.66h5.4V273.90h-5.4zM762.86 228.59h5.4V273.90h-5.4zM770.81 222.22h5.4V273.90h-5.4zM778.76 231.60h5.4V273.90h-5.4zM786.72 225.22h5.4V273.90h-5.4zM794.67 218.32h5.4V273.90h-5.4zM802.63 226.64h5.4V273.90h-5.4zM810.59 228.59h5.4V273.90h-5.4zM818.54 223.28h5.4V273.90h-5.4zM826.49 238.85h5.4V273.90h-5.4zM834.45 208.41h5.4V273.90h-5.4zM842.40 234.78h5.4V273.90h-5.4zM850.36 220.80h5.4V273.90h-5.4zM858.32 212.66h5.4V273.90h-5.4zM866.27 220.80h5.4V273.90h-5.4zM874.22 220.80h5.4V273.90h-5.4zM882.18 224.16h5.4V273.90h-5.4zM890.13 233.72h5.4V273.90h-5.4zM898.09 215.84h5.4V273.90h-5.4zM906.05 225.76h5.4V273.90h-5.4zM914.00 222.57h5.4V273.90h-5.4zM921.95 227.70h5.4V273.90h-5.4zM929.91 214.43h5.4V273.90h-5.4zM937.87 236.73h5.4V273.90h-5.4z" fill="#0f9a2e"/>
<path d="M280.30 273.5H940.57" stroke="#e0a0c4" stroke-width="0.8" fill="none"/>
<path d="M280.30 184.90C281.89 188.44 286.66 202.60 288.25 202.60C289.85 202.60 294.62 184.90 296.21 184.90C297.80 184.90 301.91 200.09 304.17 202.60C305.09 203.63 311.19 203.63 312.12 202.60C314.38 200.09 318.48 184.90 320.07 184.90C321.67 184.90 325.77 200.09 328.03 202.60C328.96 203.63 335.06 203.63 335.99 202.60C338.24 200.09 341.68 187.41 343.94 184.90C344.87 183.87 350.30 184.90 351.89 184.90C353.49 184.90 358.26 184.90 359.85 184.90C361.44 184.90 366.21 184.90 367.81 184.90C369.40 184.90 374.17 184.90 375.76 184.90C377.35 184.90 382.12 184.90 383.72 184.90C385.31 184.90 390.08 184.90 391.67 184.90C393.26 184.90 398.03 184.90 399.62 184.90C401.22 184.90 405.99 184.90 407.58 184.90C409.17 184.90 413.94 184.90 415.54 184.90C417.13 184.90 421.90 184.90 423.49 184.90C425.08 184.90 429.85 184.90 431.45 184.90C433.04 184.90 437.81 184.90 439.40 184.90C440.99 184.90 445.76 184.90 447.36 184.90C448.95 184.90 453.72 184.90 455.31 184.90C456.90 184.90 461.67 184.90 463.26 184.90C464.86 184.90 469.63 184.90 471.22 184.90C472.81 184.90 477.58 184.90 479.18 184.90C480.77 184.90 485.54 184.90 487.13 184.90C488.72 184.90 493.49 184.90 495.09 184.90C496.68 184.90 501.45 184.90 503.04 184.90C504.63 184.90 509.40 184.90 511.00 184.90C512.59 184.90 517.36 184.90 518.95 184.90C520.54 184.90 525.31 184.90 526.90 184.90C528.50 184.90 533.27 184.90 534.86 184.90C536.45 184.90 541.89 183.87 542.82 184.90C545.07 187.41 549.18 202.60 550.77 202.60C552.36 202.60 556.47 187.41 558.73 184.90C559.65 183.87 565.09 184.90 566.68 184.90C568.27 184.90 573.04 184.90 574.63 184.90C576.23 184.90 581.00 184.90 582.59 184.90C584.18 184.90 588.95 184.90 590.55 184.90C592.14 184.90 596.91 184.90 598.50 184.90C600.09 184.90 604.86 184.90 606.46 184.90C608.05 184.90 612.82 184.90 614.41 184.90C616.00 184.90 621.44 183.87 622.37 184.90C624.62 187.41 628.73 202.60 630.32 202.60C631.91 202.60 636.02 187.41 638.28 184.90C639.20 183.87 644.64 184.90 646.23 184.90C647.82 184.90 652.59 184.90 654.18 184.90C655.78 184.90 661.21 183.87 662.14 184.90C664.40 187.41 667.84 200.09 670.10 202.60C671.02 203.63 677.12 203.63 678.05 202.60C680.31 200.09 683.75 187.41 686.00 184.90C686.93 183.87 692.37 184.90 693.96 184.90C695.55 184.90 700.32 184.90 701.91 184.90C703.51 184.90 708.28 184.90 709.87 184.90C711.46 184.90 716.23 184.90 717.83 184.90C719.42 184.90 724.19 184.90 725.78 184.90C727.37 184.90 732.14 184.90 733.74 184.90C735.33 184.90 740.76 183.87 741.69 184.90C743.95 187.41 747.39 200.09 749.64 202.60C750.57 203.63 756.67 203.63 757.60 202.60C759.86 200.09 763.30 187.41 765.56 184.90C766.48 183.87 771.92 184.90 773.51 184.90C775.10 184.90 780.54 183.87 781.47 184.90C783.72 187.41 787.83 202.60 789.42 202.60C791.01 202.60 795.12 187.41 797.38 184.90C798.30 183.87 804.40 183.87 805.33 184.90C807.59 187.41 811.69 202.60 813.29 202.60C814.88 202.60 820.13 183.67 821.24 184.90C823.31 187.21 827.60 220.30 829.19 220.30C830.79 220.30 835.08 187.21 837.15 184.90C838.26 183.67 843.51 202.60 845.11 202.60C846.70 202.60 850.80 187.41 853.06 184.90C853.99 183.87 859.42 184.90 861.02 184.90C862.61 184.90 867.38 184.90 868.97 184.90C870.56 184.90 875.33 184.90 876.92 184.90C878.52 184.90 883.29 184.90 884.88 184.90C886.47 184.90 891.24 184.90 892.84 184.90C894.43 184.90 899.86 183.87 900.79 184.90C903.05 187.41 907.15 202.60 908.75 202.60C910.34 202.60 915.11 184.90 916.70 184.90C918.29 184.90 923.06 202.60 924.65 202.60C926.25 202.60 931.02 184.90 932.61 184.90C934.20 184.90 938.97 199.06 940.57 202.60" stroke="#3d3568" stroke-width="1.3" fill="none" stroke-linejoin="round"/>
<path d="M280.30 238.90C281.89 242.44 287.15 257.83 288.25 256.60C290.33 254.29 294.14 223.51 296.21 221.20C297.32 219.97 302.57 235.36 304.17 238.90C305.76 242.44 309.86 254.09 312.12 256.60C313.05 257.63 319.15 257.63 320.07 256.60C322.33 254.09 326.44 238.90 328.03 238.90C329.62 238.90 333.73 254.09 335.99 256.60C336.91 257.63 343.01 257.63 343.94 256.60C346.20 254.09 349.64 241.41 351.89 238.90C352.82 237.87 358.92 237.87 359.85 238.90C362.11 241.41 365.55 254.09 367.81 256.60C368.73 257.63 374.17 256.60 375.76 256.60C377.35 256.60 382.12 256.60 383.72 256.60C385.31 256.60 390.08 256.60 391.67 256.60C393.26 256.60 398.70 257.63 399.62 256.60C401.88 254.09 405.99 238.90 407.58 238.90C409.17 238.90 413.28 254.09 415.54 256.60C416.46 257.63 421.90 256.60 423.49 256.60C425.08 256.60 429.85 256.60 431.45 256.60C433.04 256.60 437.81 256.60 439.40 256.60C440.99 256.60 445.76 256.60 447.36 256.60C448.95 256.60 453.72 256.60 455.31 256.60C456.90 256.60 461.67 256.60 463.26 256.60C464.86 256.60 469.63 256.60 471.22 256.60C472.81 256.60 477.58 256.60 479.18 256.60C480.77 256.60 485.54 256.60 487.13 256.60C488.72 256.60 493.49 256.60 495.09 256.60C496.68 256.60 502.11 257.63 503.04 256.60C505.30 254.09 509.40 238.90 511.00 238.90C512.59 238.90 516.69 254.09 518.95 256.60C519.88 257.63 525.31 256.60 526.90 256.60C528.50 256.60 533.27 256.60 534.86 256.60C536.45 256.60 541.22 256.60 542.82 256.60C544.41 256.60 549.18 256.60 550.77 256.60C552.36 256.60 557.13 256.60 558.73 256.60C560.32 256.60 565.09 256.60 566.68 256.60C568.27 256.60 573.04 256.60 574.63 256.60C576.23 256.60 581.00 256.60 582.59 256.60C584.18 256.60 588.95 256.60 590.55 256.60C592.14 256.60 597.57 257.63 598.50 256.60C600.76 254.09 604.86 238.90 606.46 238.90C608.05 238.90 612.15 254.09 614.41 256.60C615.34 257.63 620.77 256.60 622.37 256.60C623.96 256.60 628.73 256.60 630.32 256.60C631.91 256.60 636.68 256.60 638.28 256.60C639.87 256.60 644.64 256.60 646.23 256.60C647.82 256.60 652.59 256.60 654.18 256.60C655.78 256.60 660.55 256.60 662.14 256.60C663.73 256.60 668.50 256.60 670.10 256.60C671.69 256.60 677.12 257.63 678.05 256.60C680.31 254.09 684.41 238.90 686.00 238.90C687.60 238.90 691.70 254.09 693.96 256.60C694.89 257.63 701.34 257.87 701.91 256.60C704.52 250.79 707.80 223.51 709.87 221.20C710.98 219.97 716.23 235.36 717.83 238.90C719.42 242.44 723.52 254.09 725.78 256.60C726.71 257.63 732.14 256.60 733.74 256.60C735.33 256.60 740.10 256.60 741.69 256.60C743.28 256.60 748.05 256.60 749.64 256.60C751.24 256.60 756.01 256.60 757.60 256.60C759.19 256.60 763.96 256.60 765.56 256.60C767.15 256.60 771.92 256.60 773.51 256.60C775.10 256.60 779.87 256.60 781.47 256.60C783.06 256.60 787.83 256.60 789.42 256.60C791.01 256.60 795.78 256.60 797.38 256.60C798.97 256.60 803.74 256.60 805.33 256.60C806.92 256.60 811.69 256.60 813.29 256.60C814.88 256.60 819.65 256.60 821.24 256.60C822.83 256.60 827.60 256.60 829.19 256.60C830.79 256.60 835.56 256.60 837.15 256.60C838.74 256.60 843.51 256.60 845.11 256.60C846.70 256.60 852.13 257.63 853.06 256.60C855.32 254.09 859.42 238.90 861.02 238.90C862.61 238.90 866.71 254.09 868.97 256.60C869.90 257.63 875.33 256.60 876.92 256.60C878.52 256.60 883.29 256.60 884.88 256.60C886.47 256.60 891.24 256.60 892.84 256.60C894.43 256.60 899.20 256.60 900.79 256.60C902.38 256.60 907.15 256.60 908.75 256.60C910.34 256.60 915.11 256.60 916.70 256.60C918.29 256.60 923.06 256.60 924.65 256.60C926.25 256.60 931.02 256.60 932.61 256.60C934.20 256.60 938.97 256.60 940.57 256.60" stroke="#d8322c" stroke-width="1.3" fill="none" stroke-linejoin="round"/>
<path d="M276.5 180V274.5" stroke="#666" stroke-width="1"/>
<path d="M276.5 274.4H944.8" stroke="#666" stroke-width="1"/>
<path d="M280.30 274.4v2.6M288.25 274.4v2.6M296.21 274.4v2.6M304.17 274.4v2.6M312.12 274.4v2.6M320.07 274.4v2.6M328.03 274.4v2.6M335.99 274.4v2.6M343.94 274.4v2.6M351.89 274.4v2.6M359.85 274.4v2.6M367.81 274.4v2.6M375.76 274.4v2.6M383.72 274.4v2.6M391.67 274.4v2.6M399.62 274.4v2.6M407.58 274.4v2.6M415.54 274.4v2.6M423.49 274.4v2.6M431.45 274.4v2.6M439.40 274.4v2.6M447.36 274.4v2.6M455.31 274.4v2.6M463.26 274.4v2.6M471.22 274.4v2.6M479.18 274.4v2.6M487.13 274.4v2.6M495.09 274.4v2.6M503.04 274.4v2.6M511.00 274.4v2.6M518.95 274.4v2.6M526.90 274.4v2.6M534.86 274.4v2.6M542.82 274.4v2.6M550.77 274.4v2.6M558.73 274.4v2.6M566.68 274.4v2.6M574.63 274.4v2.6M582.59 274.4v2.6M590.55 274.4v2.6M598.50 274.4v2.6M606.46 274.4v2.6M614.41 274.4v2.6M622.37 274.4v2.6M630.32 274.4v2.6M638.28 274.4v2.6M646.23 274.4v2.6M654.18 274.4v2.6M662.14 274.4v2.6M670.10 274.4v2.6M678.05 274.4v2.6M686.00 274.4v2.6M693.96 274.4v2.6M701.91 274.4v2.6M709.87 274.4v2.6M717.83 274.4v2.6M725.78 274.4v2.6M733.74 274.4v2.6M741.69 274.4v2.6M749.64 274.4v2.6M757.60 274.4v2.6M765.56 274.4v2.6M773.51 274.4v2.6M781.47 274.4v2.6M789.42 274.4v2.6M797.38 274.4v2.6M805.33 274.4v2.6M813.29 274.4v2.6M821.24 274.4v2.6M829.19 274.4v2.6M837.15 274.4v2.6M845.11 274.4v2.6M853.06 274.4v2.6M861.02 274.4v2.6M868.97 274.4v2.6M876.92 274.4v2.6M884.88 274.4v2.6M892.84 274.4v2.6M900.79 274.4v2.6M908.75 274.4v2.6M916.70 274.4v2.6M924.65 274.4v2.6M932.61 274.4v2.6M940.57 274.4v2.6M273.8 273.90h2.7M273.8 256.20h2.7M273.8 238.50h2.7M273.8 220.80h2.7M273.8 203.10h2.7M273.8 185.40h2.7" stroke="#5a5a5a" stroke-width="0.9"/>
<text x="272.5" y="275.80" text-anchor="end" class="yl">0</text>
<text x="272.5" y="258.10" text-anchor="end" class="yl">1</text>
<text x="272.5" y="240.40" text-anchor="end" class="yl">2</text>
<text x="272.5" y="222.70" text-anchor="end" class="yl">3</text>
<text x="272.5" y="205.00" text-anchor="end" class="yl">4</text>
<text x="272.5" y="187.30" text-anchor="end" class="yl">5</text>
<text transform="translate(282.90 277.8) rotate(-90)" text-anchor="end" class="xl">May 24</text>
<text transform="translate(298.81 277.8) rotate(-90)" text-anchor="end" class="xl">May 26</text>
<text transform="translate(314.72 277.8) rotate(-90)" text-anchor="end" class="xl">May 28</text>
<text transform="translate(330.63 277.8) rotate(-90)" text-anchor="end" class="xl">May 30</text>
<text transform="translate(346.54 277.8) rotate(-90)" text-anchor="end" class="xl">Jun 01</text>
<text transform="translate(362.45 277.8) rotate(-90)" text-anchor="end" class="xl">Jun 03</text>
<text transform="translate(378.36 277.8) rotate(-90)" text-anchor="end" class="xl">Jun 05</text>
<text transform="translate(394.27 277.8) rotate(-90)" text-anchor="end" class="xl">Jun 07</text>
<text transform="translate(410.18 277.8) rotate(-90)" text-anchor="end" class="xl">Jun 09</text>
<text transform="translate(426.09 277.8) rotate(-90)" text-anchor="end" class="xl">Jun 11</text>
<text transform="translate(442.00 277.8) rotate(-90)" text-anchor="end" class="xl">Jun 13</text>
<text transform="translate(457.91 277.8) rotate(-90)" text-anchor="end" class="xl">Jun 15</text>
<text transform="translate(473.82 277.8) rotate(-90)" text-anchor="end" class="xl">Jun 17</text>
<text transform="translate(489.73 277.8) rotate(-90)" text-anchor="end" class="xl">Jun 19</text>
<text transform="translate(505.64 277.8) rotate(-90)" text-anchor="end" class="xl">Jun 21</text>
<text transform="translate(521.55 277.8) rotate(-90)" text-anchor="end" class="xl">Jun 23</text>
<text transform="translate(537.46 277.8) rotate(-90)" text-anchor="end" class="xl">Jun 25</text>
<text transform="translate(553.37 277.8) rotate(-90)" text-anchor="end" class="xl">Jun 27</text>
<text transform="translate(569.28 277.8) rotate(-90)" text-anchor="end" class="xl">Jun 29</text>
<text transform="translate(585.19 277.8) rotate(-90)" text-anchor="end" class="xl">Jul 01</text>
<text transform="translate(601.10 277.8) rotate(-90)" text-anchor="end" class="xl">Jul 03</text>
<text transform="translate(617.01 277.8) rotate(-90)" text-anchor="end" class="xl">Jul 05</text>
<text transform="translate(632.92 277.8) rotate(-90)" text-anchor="end" class="xl">Jul 07</text>
<text transform="translate(648.83 277.8) rotate(-90)" text-anchor="end" class="xl">Jul 09</text>
<text transform="translate(664.74 277.8) rotate(-90)" text-anchor="end" class="xl">Jul 11</text>
<text transform="translate(680.65 277.8) rotate(-90)" text-anchor="end" class="xl">Jul 13</text>
<text transform="translate(696.56 277.8) rotate(-90)" text-anchor="end" class="xl">Jul 15</text>
<text transform="translate(712.47 277.8) rotate(-90)" text-anchor="end" class="xl">Jul 17</text>
<text transform="translate(728.38 277.8) rotate(-90)" text-anchor="end" class="xl">Jul 19</text>
<text transform="translate(744.29 277.8) rotate(-90)" text-anchor="end" class="xl">Jul 21</text>
<text transform="translate(760.20 277.8) rotate(-90)" text-anchor="end" class="xl">Jul 23</text>
<text transform="translate(776.11 277.8) rotate(-90)" text-anchor="end" class="xl">Jul 25</text>
<text transform="translate(792.02 277.8) rotate(-90)" text-anchor="end" class="xl">Jul 27</text>
<text transform="translate(807.93 277.8) rotate(-90)" text-anchor="end" class="xl">Jul 29</text>
<text transform="translate(823.84 277.8) rotate(-90)" text-anchor="end" class="xl">Jul 31</text>
<text transform="translate(839.75 277.8) rotate(-90)" text-anchor="end" class="xl">Aug 02</text>
<text transform="translate(855.66 277.8) rotate(-90)" text-anchor="end" class="xl">Aug 04</text>
<text transform="translate(871.57 277.8) rotate(-90)" text-anchor="end" class="xl">Aug 06</text>
<text transform="translate(887.48 277.8) rotate(-90)" text-anchor="end" class="xl">Aug 08</text>
<text transform="translate(903.39 277.8) rotate(-90)" text-anchor="end" class="xl">Aug 10</text>
<text transform="translate(919.30 277.8) rotate(-90)" text-anchor="end" class="xl">Aug 12</text>
<text transform="translate(935.21 277.8) rotate(-90)" text-anchor="end" class="xl">Aug 14</text>
</svg>

<div class="lgs" style="left:500px;background:#109a30"></div><div class="lg" style="left:507.5px">Team Score</div>
<div class="lgs" style="left:550px;background:#c4479c"></div><div class="lg" style="left:557px">Company Score</div>
<div class="lgs" style="left:611.2px;background:#4d3b9c"></div><div class="lg" style="left:618.7px">Highest Score</div>
<div class="lgs" style="left:667.5px;background:#e84646"></div><div class="lg" style="left:675px">Lowest Score</div>

<!-- main panel 2 -->
<div class="white" style="left:263px;top:340px;width:686.6px;height:134px"></div>
<svg class="a" style="left:266px;top:342.5px" width="10" height="9"><path d="M5 0.8a4 3.4 0 1 1-2.6 6.2L0.8 8.2l0.8-1.9A4 3.4 0 0 1 5 0.8z" fill="none" stroke="#777" stroke-width="0.7"/><path d="M4 3a1.1 1.1 0 1 1 1.1 1.1v0.9" fill="none" stroke="#777" stroke-width="0.6"/></svg>
<div class="txt" style="left:278.4px;top:343.7px;font-size:6.9px;color:#555">Survey Questions</div>
<div class="card" style="left:273.2px;top:366px"><div class="ct">How long did you expect resolution to<br>take?</div></div>
<div class="card" style="left:408px;top:366px"><div class="ct">How easy was it to make a complaint?</div></div>
<div class="card" style="left:543.3px;top:366px"><div class="ct">How well informed do you feel you<br>were kept?</div></div>
<div class="card" style="left:678.3px;top:366px"><div class="ct">How fairly do you felt you were treated?</div></div>
<div class="card" style="left:813.5px;top:366px"><div class="ct">How would you rate your Case<br>Handler?</div></div>
<div class="card" style="left:273.2px;top:434.4px"><div class="ct">How easy was it to reach an outcome?</div></div>
<svg class="a" style="left:0;top:0" width="960" height="476">
<rect x="280" y="389" width="25.9" height="29.3" fill="#2fa8dd"/>
<rect x="308.6" y="389.5" width="25.9" height="28.8" fill="#2fa8dd"/>
<rect x="337.1" y="392.2" width="25.9" height="26.1" fill="#2fa8dd"/>
<rect x="365.6" y="389" width="25.9" height="29.3" fill="#2fa8dd"/>
<path d="M414.2 407H526.4" stroke="#777" stroke-width="0.7"/>
<path d="M415.2 406.5v3M442.8 406.5v3M470.3 406.5v3M497.9 406.5v3M525.4 406.5v3" stroke="#666" stroke-width="0.7"/>
<text x="415.2" y="418.3" text-anchor="middle" class="cl">1</text>
<text x="442.8" y="418.3" text-anchor="middle" class="cl">2</text>
<text x="470.3" y="418.3" text-anchor="middle" class="cl">3</text>
<text x="497.9" y="418.3" text-anchor="middle" class="cl">4</text>
<text x="525.4" y="418.3" text-anchor="middle" class="cl">5</text>
<path d="M415.2 400.2 L442.8 398.5 L470.3 398.8 L497.9 399.7 L525.4 396.2" stroke="#2fa8dd" stroke-width="1.1" fill="none"/>
<circle cx="415.2" cy="400.2" r="1.7" fill="#fff" stroke="#2fa8dd" stroke-width="1"/>
<circle cx="442.8" cy="398.5" r="1.7" fill="#fff" stroke="#2fa8dd" stroke-width="1"/>
<circle cx="470.3" cy="398.8" r="1.7" fill="#fff" stroke="#2fa8dd" stroke-width="1"/>
<circle cx="497.9" cy="399.7" r="1.7" fill="#fff" stroke="#2fa8dd" stroke-width="1"/>
<circle cx="525.4" cy="396.2" r="1.7" fill="#fff" stroke="#2fa8dd" stroke-width="1"/>
<path d="M549.5 407H661.7" stroke="#777" stroke-width="0.7"/>
<path d="M550.5 406.5v3M578.0 406.5v3M605.6 406.5v3M633.1 406.5v3M660.7 406.5v3" stroke="#666" stroke-width="0.7"/>
<text x="550.5" y="418.3" text-anchor="middle" class="cl">1</text>
<text x="578.0" y="418.3" text-anchor="middle" class="cl">2</text>
<text x="605.6" y="418.3" text-anchor="middle" class="cl">3</text>
<text x="633.1" y="418.3" text-anchor="middle" class="cl">4</text>
<text x="660.7" y="418.3" text-anchor="middle" class="cl">5</text>
<path d="M550.5 398.3 L578.0 399.6 L605.6 397.6 L633.1 400.5 L660.7 398.3" stroke="#2fa8dd" stroke-width="1.1" fill="none"/>
<circle cx="550.5" cy="398.3" r="1.7" fill="#fff" stroke="#2fa8dd" stroke-width="1"/>
<circle cx="578.0" cy="399.6" r="1.7" fill="#fff" stroke="#2fa8dd" stroke-width="1"/>
<circle cx="605.6" cy="397.6" r="1.7" fill="#fff" stroke="#2fa8dd" stroke-width="1"/>
<circle cx="633.1" cy="400.5" r="1.7" fill="#fff" stroke="#2fa8dd" stroke-width="1"/>
<circle cx="660.7" cy="398.3" r="1.7" fill="#fff" stroke="#2fa8dd" stroke-width="1"/>
<path d="M684.5 407H796.7" stroke="#777" stroke-width="0.7"/>
<path d="M685.5 406.5v3M713.0 406.5v3M740.6 406.5v3M768.1 406.5v3M795.7 406.5v3" stroke="#666" stroke-width="0.7"/>
<text x="685.5" y="418.3" text-anchor="middle" class="cl">1</text>
<text x="713.0" y="418.3" text-anchor="middle" class="cl">2</text>
<text x="740.6" y="418.3" text-anchor="middle" class="cl">3</text>
<text x="768.1" y="418.3" text-anchor="middle" class="cl">4</text>
<text x="795.7" y="418.3" text-anchor="middle" class="cl">5</text>
<path d="M685.5 398.7 L713.0 400.9 L740.6 399.6 L768.1 394.4 L795.7 397.9" stroke="#2fa8dd" stroke-width="1.1" fill="none"/>
<circle cx="685.5" cy="398.7" r="1.7" fill="#fff" stroke="#2fa8dd" stroke-width="1"/>
<circle cx="713.0" cy="400.9" r="1.7" fill="#fff" stroke="#2fa8dd" stroke-width="1"/>
<circle cx="740.6" cy="399.6" r="1.7" fill="#fff" stroke="#2fa8dd" stroke-width="1"/>
<circle cx="768.1" cy="394.4" r="1.7" fill="#fff" stroke="#2fa8dd" stroke-width="1"/>
<circle cx="795.7" cy="397.9" r="1.7" fill="#fff" stroke="#2fa8dd" stroke-width="1"/>
<path d="M819.7 407H931.9" stroke="#777" stroke-width="0.7"/>
<path d="M820.7 406.5v3M848.2 406.5v3M875.8 406.5v3M903.4 406.5v3M930.9 406.5v3" stroke="#666" stroke-width="0.7"/>
<text x="820.7" y="418.3" text-anchor="middle" class="cl">1</text>
<text x="848.2" y="418.3" text-anchor="middle" class="cl">2</text>
<text x="875.8" y="418.3" text-anchor="middle" class="cl">3</text>
<text x="903.4" y="418.3" text-anchor="middle" class="cl">4</text>
<text x="930.9" y="418.3" text-anchor="middle" class="cl">5</text>
<path d="M820.7 397.4 L848.2 395.2 L875.8 398.7 L903.4 402.2 L930.9 397.9" stroke="#2fa8dd" stroke-width="1.1" fill="none"/>
<circle cx="820.7" cy="397.4" r="1.7" fill="#fff" stroke="#2fa8dd" stroke-width="1"/>
<circle cx="848.2" cy="395.2" r="1.7" fill="#fff" stroke="#2fa8dd" stroke-width="1"/>
<circle cx="875.8" cy="398.7" r="1.7" fill="#fff" stroke="#2fa8dd" stroke-width="1"/>
<circle cx="903.4" cy="402.2" r="1.7" fill="#fff" stroke="#2fa8dd" stroke-width="1"/>
<circle cx="930.9" cy="397.9" r="1.7" fill="#fff" stroke="#2fa8dd" stroke-width="1"/>
<path d="M280.4 468.2 L307.9 466.1 L335.5 470.5 L363.0 467.0 L390.6 462.3" stroke="#2fa8dd" stroke-width="1.1" fill="none"/>
<circle cx="280.4" cy="468.2" r="1.7" fill="#fff" stroke="#2fa8dd" stroke-width="1"/>
<circle cx="307.9" cy="466.1" r="1.7" fill="#fff" stroke="#2fa8dd" stroke-width="1"/>
<circle cx="335.5" cy="470.5" r="1.7" fill="#fff" stroke="#2fa8dd" stroke-width="1"/>
<circle cx="363.0" cy="467.0" r="1.7" fill="#fff" stroke="#2fa8dd" stroke-width="1"/>
<circle cx="390.6" cy="462.3" r="1.7" fill="#fff" stroke="#2fa8dd" stroke-width="1"/>
</svg>
</body></html>
